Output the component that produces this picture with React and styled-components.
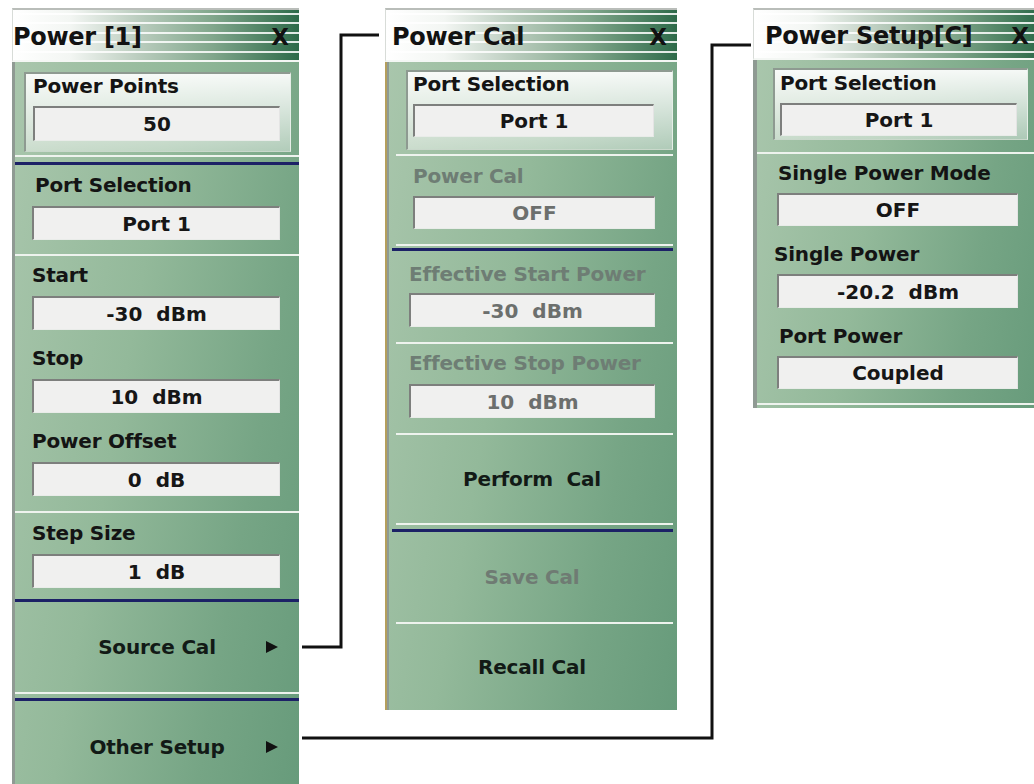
import React from 'react'
import styled, {createGlobalStyle} from 'styled-components'

const GlobalStyle = createGlobalStyle`
  html, body {
    margin: 0;
    padding: 0;
    background: #ffffff;
    overflow: hidden;
  }
  body {
    font-family: "DejaVu Sans", "Liberation Sans", sans-serif;
  }
`

const Canvas = styled.div`
  position: relative;
  width: 1034px;
  height: 784px;
  overflow: hidden;
  background: #ffffff;
`

// each menu is a window placed on the drawing, so its place is the content
const Panel = styled.div`
  position: absolute;
  left: ${p => p.$left}px;
  top: ${p => p.$top}px;
  width: ${p => p.$width}px;
  height: ${p => p.$height}px;
  display: flex;
  flex-direction: column;
  box-sizing: border-box;
  overflow: hidden;
`

const TitleBar = styled.div`
  height: ${p => p.$h}px;
  flex: none;
  box-sizing: border-box;
  display: flex;
  align-items: center;
  justify-content: space-between;
  padding: 4px 10px 0 ${p => p.$pad}px;
  border-top: 2px solid #b9bdb9;
  border-left: 1px solid #d8dcd8;
  border-bottom: 2px solid #f4f7f4;
  background:
    repeating-linear-gradient(180deg, transparent 0px, transparent 3px, rgba(255, 255, 255, 0.85) 3px, rgba(255, 255, 255, 0.85) 5px, transparent 5px, transparent 9.4px),
    linear-gradient(90deg, #ffffff 0%, #f3f6f3 20%, #b8cbbc 45%, #80a68b 70%, #2d6a49 100%);
`

const Title = styled.span`
  font-weight: bold;
  font-size: 24px;
  letter-spacing: -0.3px;
  color: #121212;
  white-space: pre;
`

const Close = styled.span`
  font-weight: bold;
  font-size: 23px;
  color: #111;
`

const Body = styled.div`
  flex: 1;
  display: flex;
  flex-direction: column;
  box-sizing: border-box;
  border-left: ${p => p.$edge};
  box-shadow: ${p => p.$inner || 'none'};
  background: linear-gradient(100deg, #a9c6ac 0%, #93b99a 40%, #76a585 75%, #679b7b 100%);
`

const GroupBox = styled.div`
  display: flex;
  flex-direction: column;
  box-sizing: border-box;
  height: ${p => p.$h}px;
  margin: ${p => p.$margin};
  padding: ${p => p.$pad};
  border-top: 2px solid #8e9a91;
  border-left: 2px solid #8e9a91;
  border-right: 1px solid #e6eee7;
  border-bottom: 1px solid #c9d8cb;
  background: linear-gradient(180deg, rgba(255, 255, 255, 0.93) 0%, rgba(255, 255, 255, 0.7) 45%, rgba(255, 255, 255, 0.42) 100%);
`

const Section = styled.div`
  display: flex;
  flex-direction: column;
  gap: ${p => p.$gap || 17}px;
  padding: ${p => p.$pad};
`

const Item = styled.div`
  display: flex;
  flex-direction: column;
  gap: ${p => p.$gap || 10}px;
`

const Label = styled.div`
  height: 22px;
  line-height: 22px;
  font-weight: bold;
  font-size: 20px;
  letter-spacing: -0.2px;
  color: ${p => (p.$dim ? '#6e7d74' : '#141414')};
  white-space: nowrap;
  margin-left: ${p => p.$shift || 0}px;
`

const Field = styled.div`
  height: ${p => p.$h || 34}px;
  box-sizing: border-box;
  display: flex;
  align-items: center;
  justify-content: center;
  border-top: 2px solid #7d7f7d;
  border-left: 2px solid #7d7f7d;
  border-right: 1px solid #e4e4e4;
  border-bottom: 1px solid #e9ece9;
  background: #f0f0ef;
  font-weight: bold;
  font-size: 20px;
  color: ${p => (p.$dim ? '#6c6f6d' : '#161616')};
  white-space: pre;
`

const Rule = styled.div`
  flex: none;
  height: ${p => (p.$navy ? 3 : 2)}px;
  margin: ${p => p.$margin || '0'};
  background: ${p => (p.$navy ? '#1c2166' : '#eef3ee')};
`

const MenuButton = styled.div`
  flex: none;
  height: ${p => p.$h}px;
  display: grid;
  grid-template-columns: 1fr auto 1fr;
  align-items: center;
  padding: 0 ${p => p.$side || 0}px;
  font-weight: bold;
  font-size: 20px;
  letter-spacing: -0.2px;
  color: ${p => (p.$dim ? '#6f7b73' : '#121a16')};
`

const ButtonText = styled.span`
  grid-column: 2;
  white-space: pre;
`

const ArrowSlot = styled.span`
  grid-column: 3;
  justify-self: end;
  display: flex;
`

const Connectors = styled.svg`
  position: absolute;
  left: 0;
  top: 0;
  pointer-events: none;
`

const Arrow = () => (
    <svg width="14" height="14" viewBox="0 0 14 14">
        <polygon points="1,1 13,7 1,13" fill="#111"/>
    </svg>
)

const Entry = ({label, value, dim, gap, h, shift}) => (
    <Item $gap={gap}>
        <Label $dim={dim} $shift={shift}>{label}</Label>
        <Field $dim={dim} $h={h}>{value}</Field>
    </Item>
)

const PowerPanel = () => (
    <Panel $left={12} $top={8} $width={287} $height={780}>
        <TitleBar $h={54} $pad={0}>
            <Title>Power [1]</Title>
            <Close>X</Close>
        </TitleBar>
        <Body $edge="3px solid #8f9a93">
            <GroupBox $h={80} $margin="10px 8px 0 9px" $pad="1px 10px 0 7px">
                <Item $gap={9}>
                    <Label>Power Points</Label>
                    <Field $h={35}>50</Field>
                </Item>
            </GroupBox>
            <Rule $margin="3px 0 0 0"/>
            <Rule $navy $margin="5px 0 0 0"/>
            <Section $pad="9px 19px 14px 17px">
                <Entry label="Port Selection" value="Port 1" shift={3}/>
            </Section>
            <Rule/>
            <Section $pad="8px 19px 15px 17px">
                <Entry label="Start" value="-30  dBm"/>
                <Entry label="Stop" value="10  dBm"/>
                <Entry label="Power Offset" value="0  dB"/>
            </Section>
            <Rule/>
            <Section $pad="9px 19px 11px 17px">
                <Entry label="Step Size" value="1  dB"/>
            </Section>
            <Rule $navy/>
            <MenuButton $h={90} $side={20}>
                <ButtonText>Source Cal</ButtonText>
                <ArrowSlot><Arrow/></ArrowSlot>
            </MenuButton>
            <Rule/>
            <Rule $navy $margin="4px 0 0 0"/>
            <MenuButton $h={92} $side={20}>
                <ButtonText>Other Setup</ButtonText>
                <ArrowSlot><Arrow/></ArrowSlot>
            </MenuButton>
        </Body>
    </Panel>
)

const CalPanel = () => (
    <Panel $left={385} $top={8} $width={292} $height={702}>
        <TitleBar $h={54} $pad={6}>
            <Title>Power Cal</Title>
            <Close>X</Close>
        </TitleBar>
        <Body $edge="2px solid #b59f5c" $inner="inset 2px 0 0 #8f9a93">
            <GroupBox $h={80} $margin="8px 4px 0 19px" $pad="1px 18px 0 5px">
                <Item $gap={9}>
                    <Label>Port Selection</Label>
                    <Field $h={33}>Port 1</Field>
                </Item>
            </GroupBox>
            <Rule $margin="4px 4px 0 9px"/>
            <Section $pad="9px 22px 15px 26px">
                <Entry label="Power Cal" value="OFF" dim gap={9} h={33}/>
            </Section>
            <Rule $margin="0 4px 0 9px"/>
            <Rule $navy $margin="2px 4px 0 5px"/>
            <Section $pad="12px 22px 15px 22px">
                <Entry label="Effective Start Power" value="-30  dBm" dim gap={8}/>
            </Section>
            <Rule $margin="0 4px 0 9px"/>
            <Section $pad="8px 22px 15px 22px">
                <Entry label="Effective Stop Power" value="10  dBm" dim/>
            </Section>
            <Rule $margin="0 4px 0 9px"/>
            <MenuButton $h={88}>
                <ButtonText>Perform  Cal</ButtonText>
            </MenuButton>
            <Rule $margin="0 4px 0 9px"/>
            <Rule $navy $margin="4px 4px 0 5px"/>
            <MenuButton $h={90} $dim>
                <ButtonText>Save Cal</ButtonText>
            </MenuButton>
            <Rule $margin="0 4px 0 9px"/>
            <MenuButton $h={86}>
                <ButtonText>Recall Cal</ButtonText>
            </MenuButton>
        </Body>
    </Panel>
)

const SetupPanel = () => (
    <Panel $left={753} $top={8} $width={286} $height={400}>
        <TitleBar $h={52} $pad={11}>
            <Title>Power Setup[C]</Title>
            <Close>X</Close>
        </TitleBar>
        <Body $edge="4px solid #8f9a93">
            <GroupBox $h={72} $margin="8px 11px 0 16px" $pad="2px 10px 0 5px">
                <Item $gap={9}>
                    <Label>Port Selection</Label>
                    <Field $h={33}>Port 1</Field>
                </Item>
            </GroupBox>
            <Rule $margin="12px 0 0 0"/>
            <Section $pad="8px 21px 14px 20px">
                <Entry label="Single Power Mode" value="OFF" gap={9} h={33} shift={1}/>
                <Entry label="Single Power" value="-20.2  dBm" gap={9} shift={-3}/>
                <Entry label="Port Power" value="Coupled" gap={9} h={33} shift={2}/>
            </Section>
            <Rule/>
        </Body>
    </Panel>
)

const App = () => {
    return (
        <>
            <GlobalStyle/>
            <Canvas>
                <Connectors width="1034" height="784" viewBox="0 0 1034 784">
                    <polyline points="302,647 341,647 341,35 379,35" fill="none" stroke="#111" strokeWidth="3"/>
                    <polyline points="302,738 712,738 712,45 751,45" fill="none" stroke="#111" strokeWidth="3"/>
                </Connectors>
                <PowerPanel/>
                <CalPanel/>
                <SetupPanel/>
            </Canvas>
        </>
    )
}

export default App
